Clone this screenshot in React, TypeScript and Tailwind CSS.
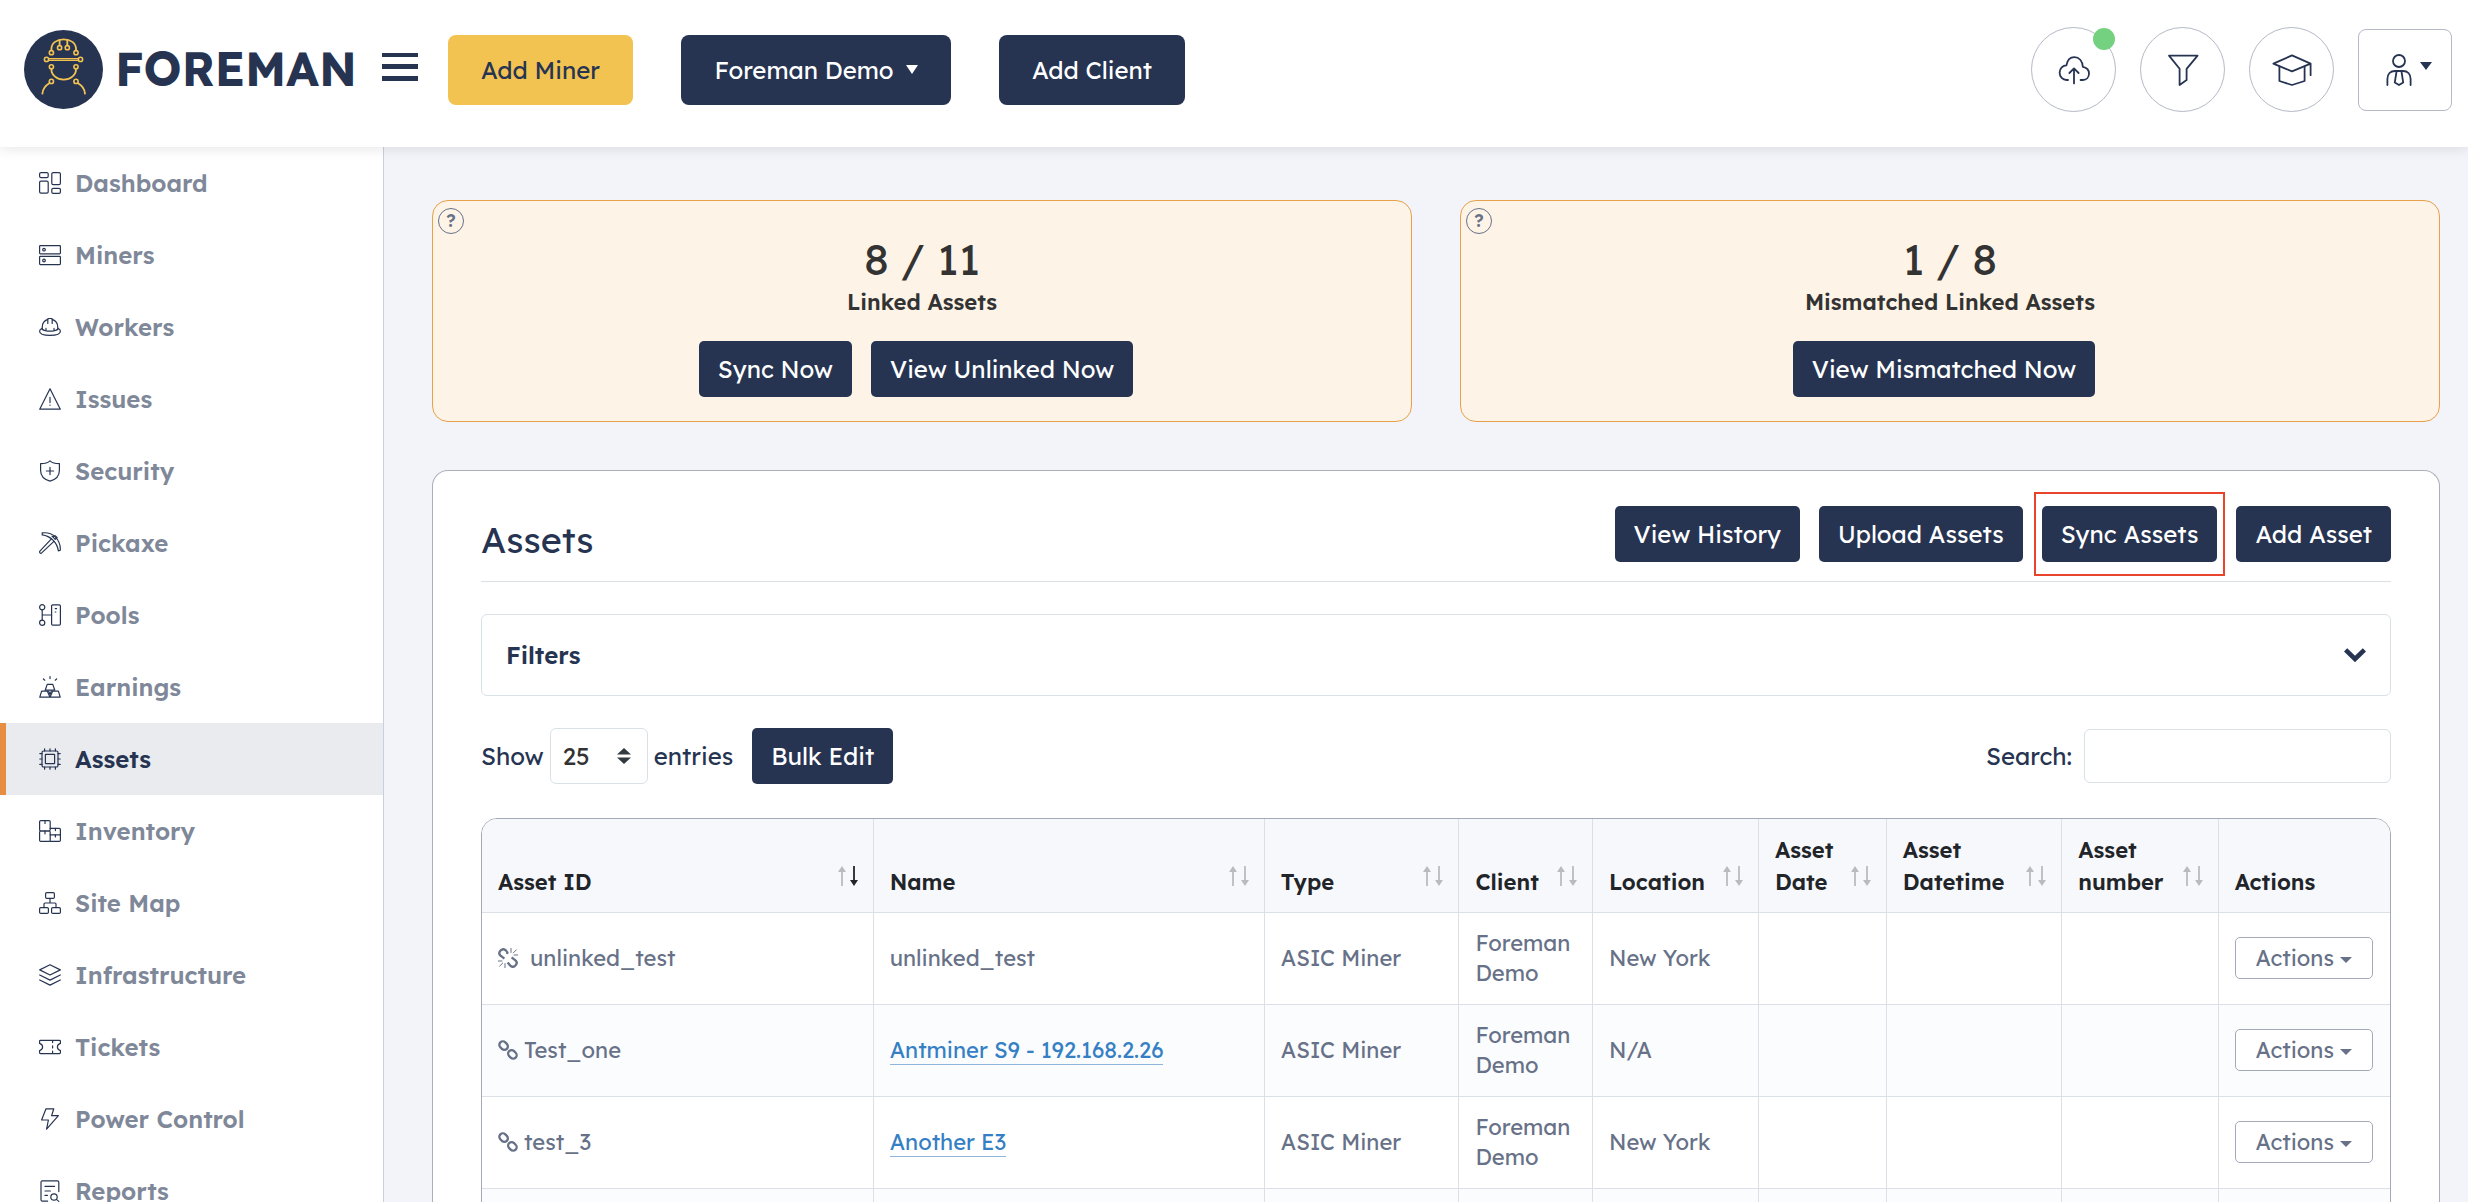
import React from "react";

type IconProps = { children: React.ReactNode };

function NavIcon({ children }: IconProps) {
  return (
    <svg
      viewBox="0 0 22 22"
      className="size-[22px] shrink-0"
      fill="none"
      stroke="#263452"
      strokeWidth="1.2"
      strokeLinejoin="round"
      strokeLinecap="round"
      aria-hidden="true"
    >
      {children}
    </svg>
  );
}

const navItems: { label: string; active?: boolean; icon: React.ReactNode }[] = [
  {
    label: "Dashboard",
    icon: (
      <>
        <rect x="0.6" y="0.6" width="8.6" height="5" rx="1.4" />
        <rect x="0.6" y="9.2" width="8.6" height="12" rx="1.4" />
        <rect x="12.8" y="0.6" width="8.6" height="12" rx="1.4" />
        <rect x="12.8" y="16.4" width="8.6" height="5" rx="1.4" />
      </>
    ),
  },
  {
    label: "Miners",
    icon: (
      <>
        <rect x="0.6" y="1.6" width="20.8" height="8.2" rx="0.8" />
        <rect x="0.6" y="12.4" width="20.8" height="8.2" rx="0.8" />
        <circle cx="5" cy="5.7" r="1.3" />
        <circle cx="5" cy="16.5" r="1.3" />
      </>
    ),
  },
  {
    label: "Workers",
    icon: (
      <>
        <path d="M3.2 13.6V11.4C3.2 7.4 5.6 4.5 8.8 3.4M13.2 3.4C16.4 4.5 18.8 7.4 18.8 11.4V13.6" />
        <path d="M8.8 7.4V3.2C8.8 2.8 9.1 2.5 9.5 2.5H12.5C12.9 2.5 13.2 2.8 13.2 3.2V7.4" />
        <path d="M3.2 12.2C1.6 12.8 .6 13.8 .6 15.2C.6 17.8 5 19.4 11 19.4S21.4 17.8 21.4 15.2C21.4 13.8 20.4 12.8 18.8 12.2" />
        <path d="M3.2 13.2C5 14.6 8 15.2 11 15.2S17 14.6 18.8 13.2M7 12.4V14.6M15 12.4V14.6" />
      </>
    ),
  },
  {
    label: "Issues",
    icon: (
      <>
        <path d="M11 .8L21.3 21.2H.7Z" />
        <path d="M11 9.4V14.6M11 17V17.3" />
      </>
    ),
  },
  {
    label: "Security",
    icon: (
      <>
        <path d="M11 .8C9 2.8 5.5 3.6 1.6 3.6V10.5C1.6 16 5.5 19.6 11 21.2C16.5 19.6 20.4 16 20.4 10.5V3.6C16.5 3.6 13 2.8 11 .8Z" />
        <path d="M7.4 11H14.6M11 7.4V14.6" />
      </>
    ),
  },
  {
    label: "Pickaxe",
    icon: (
      <>
        <path d="M3.2 .9C8 .3 13.2 1.9 16 4.6C19.2 7.8 21.6 13 21.3 18.2L19.4 18.9C18.7 14.4 16.6 10.6 14 8.2C11.2 5.4 7.4 3.4 3.2 2.9Z" />
        <path d="M12.4 6.9L.9 19.2C.5 19.8 .6 20.4 1 20.9C1.5 21.4 2.2 21.4 2.7 20.9L14.9 9.4M13 4.1L16.2 7.3L18.2 5.6L16.2 3.8L14.4 4.4" />
      </>
    ),
  },
  {
    label: "Pools",
    icon: (
      <>
        <circle cx="3.2" cy="3.2" r="2.6" />
        <circle cx="3.2" cy="18.8" r="2.6" />
        <path d="M3.2 5.8V16.2M3.2 11H12.6" />
        <rect x="12.6" y="0.8" width="8.8" height="20.4" rx="1.2" />
        <path d="M16.2 4.6H17.6M16.2 8H16.8" />
      </>
    ),
  },
  {
    label: "Earnings",
    icon: (
      <>
        <path d="M8.2 8.4H13.8L15.8 14.2H6.2Z" />
        <path d="M2.6 15.2H8.4L11 21.2H.8ZM13.6 15.2H19.4L21.2 21.2H11Z" />
        <path d="M11 .6V2.6M4.4 3L5.8 4.2M17.6 3L16.2 4.2M9.6 15L11 18.4L12.4 15" />
      </>
    ),
  },
  {
    label: "Assets",
    active: true,
    icon: (
      <>
        <rect x="3" y="3" width="16" height="16" rx="1.6" />
        <rect x="6.4" y="6.4" width="9.2" height="9.2" rx="0.4" />
        <path d="M5.6 3V.8M11 3V.8M16.4 3V.8M5.6 21.2V19M11 21.2V19M16.4 21.2V19M3 5.6H.8M3 11H.8M3 16.4H.8M21.2 5.6H19M21.2 11H19M21.2 16.4H19" />
      </>
    ),
  },
  {
    label: "Inventory",
    icon: (
      <>
        <rect x="0.6" y="0.6" width="10.6" height="10.4" rx="1.2" />
        <rect x="0.6" y="11" width="10.6" height="10.4" rx="1.2" />
        <path d="M11.2 8.4H20.2C20.9 8.4 21.4 8.9 21.4 9.6V20.2C21.4 20.9 20.9 21.4 20.2 21.4H11.2M11.2 14.8H21.4" />
        <path d="M6 .6V3.4M6 11V13.8M16.4 8.4V10.6M16.4 14.8V17" />
      </>
    ),
  },
  {
    label: "Site Map",
    icon: (
      <>
        <rect x="6.6" y="0.6" width="8.8" height="5.8" rx="1.2" />
        <rect x="0.6" y="15.6" width="8.8" height="5.8" rx="1.2" />
        <rect x="12.6" y="15.6" width="8.8" height="5.8" rx="1.2" />
        <path d="M11 6.4V11M5 15.6V12C5 11.4 5.4 11 6 11H16C16.6 11 17 11.4 17 12V15.6" />
      </>
    ),
  },
  {
    label: "Infrastructure",
    icon: (
      <>
        <path d="M11 .8L21.3 5.9L11 11L.7 5.9Z" />
        <path d="M.7 11L11 16.1L21.3 11M.7 16L11 21.1L21.3 16" />
      </>
    ),
  },
  {
    label: "Tickets",
    icon: (
      <>
        <path d="M1.4 4.4H20.6C21 4.4 21.4 4.8 21.4 5.2V7.4C19.6 8 18.4 9.4 18.4 11S19.6 14 21.4 14.6V16.8C21.4 17.2 21 17.6 20.6 17.6H1.4C1 17.6 .6 17.2 .6 16.8V14.6C2.4 14 3.6 12.6 3.6 11S2.4 8 .6 7.4V5.2C.6 4.8 1 4.4 1.4 4.4Z" />
        <path d="M13.6 4.6V6.6M13.6 9.8V12M13.6 15.2V17.4" />
      </>
    ),
  },
  {
    label: "Power Control",
    icon: <path d="M7 .8H14.8L12.6 7.6H19.4L7.6 21.2L9.4 12H2.6Z" />,
  },
  {
    label: "Reports",
    icon: (
      <>
        <path d="M8.6 21.2H3.4C2.6 21.2 2 20.6 2 19.8V2.2C2 1.4 2.6 .8 3.4 .8H18.4C19.2 .8 19.8 1.4 19.8 2.2V11.6" />
        <path d="M6 6.4H15.6M6 11H11.4M6 15.4H8.4" />
        <circle cx="15" cy="17" r="3.2" />
        <path d="M17.4 19.4L19.8 21.4" />
      </>
    ),
  },
];

function Logo() {
  return (
    <svg viewBox="0 0 79 79" className="size-[79px] shrink-0" fill="none" stroke="#f3c352" strokeWidth="1.8" strokeLinecap="round" aria-hidden="true">
      <circle cx="39.5" cy="39.5" r="39.5" fill="#263452" stroke="none" />
      <path d="M27.4 20.5V19C27.4 13 33 9.3 39.7 9.3S52 13 52 19V20.5" />
      <path d="M35.6 9.9V15.5M43.3 9.9V15.5" />
      <path d="M25 28.6H54M25 30.4H54" strokeWidth="1.2" />
      <path d="M27.4 39.2C27.4 45 33 49.7 39.7 49.7S52 45 52 39.2" />
      <path d="M25.6 52.9C20.6 56 18.6 59.4 18.4 63.6M53.8 52.9C58.8 56 60.8 59.4 61 63.6" />
      <g fill="#263452" strokeWidth="1.6">
        <circle cx="27.4" cy="22.7" r="2.1" />
        <circle cx="52" cy="22.7" r="2.1" />
        <circle cx="35.6" cy="17.7" r="2.1" />
        <circle cx="43.3" cy="17.7" r="2.1" />
        <circle cx="22.5" cy="29.4" r="2.1" />
        <circle cx="56.5" cy="29.4" r="2.1" />
        <circle cx="27.4" cy="36.8" r="2.1" />
        <circle cx="52" cy="36.8" r="2.1" />
        <circle cx="27.4" cy="51.4" r="2.1" />
        <circle cx="52" cy="51.4" r="2.1" />
      </g>
    </svg>
  );
}

function RoundButton({ label, dot, children }: { label: string; dot?: boolean; children: React.ReactNode }) {
  return (
    <button aria-label={label} className="relative flex size-[85px] shrink-0 items-center justify-center rounded-full border border-[#b4b9c5]">
      <svg viewBox="0 0 40 40" className="size-10" fill="none" stroke="#263452" strokeWidth="1.8" strokeLinejoin="round" strokeLinecap="round" aria-hidden="true">
        {children}
      </svg>
      {dot && <span className="absolute right-0 top-0 size-[22px] rounded-full bg-[#74d180]" />}
    </button>
  );
}

function Header() {
  return (
    <header className="z-10 flex h-[147px] shrink-0 items-center bg-white pl-6 pr-4 pb-2 shadow-[0_2px_12px_rgba(0,0,0,0.1)]">
      <a href="#home" className="flex w-[332px] items-center gap-3 text-[47px] font-bold text-[#263452]">
        <Logo />
        FOREMAN
      </a>
      <button aria-label="Toggle menu" className="ml-[26px] flex w-9 flex-col gap-[7px] pb-1.5">
        <span className="h-1 w-full bg-[#263452]" />
        <span className="h-[5px] w-full bg-[#263452]" />
        <span className="h-[5px] w-full bg-[#263452]" />
      </button>
      <div className="ml-[30px] flex gap-12 text-2xl">
        <button className="h-[70px] w-[185px] rounded-lg bg-[#f3c352] text-[#263452]">Add Miner</button>
        <button className="flex h-[70px] w-[270px] items-center justify-center gap-3 rounded-lg bg-[#263452] text-white">
          Foreman Demo
          <svg viewBox="0 0 12 9" className="h-[9px] w-3" fill="currentColor" aria-hidden="true">
            <path d="M0 0H12L6 9Z" />
          </svg>
        </button>
        <button className="h-[70px] w-[186px] rounded-lg bg-[#263452] text-white">Add Client</button>
      </div>
      <div className="ml-auto flex items-center gap-6">
        <RoundButton label="Uploads" dot>
          <path d="M14 30H12.6C8.8 30 5.6 27 5.6 22.6C5.6 18.2 9 15.4 12.4 15.4C13.2 10.6 16.2 7.2 20.4 7.2C25 7.2 28.6 10.8 28.8 16.8C32.6 17.4 35 20 35 23.6C35 27.4 32.4 30 29 30H26.6" />
          <path d="M20 33.4V18.4M15.4 23L20 18.4L24.6 23" />
        </RoundButton>
        <RoundButton label="Filter">
          <path d="M6 5.6H34.6L23.6 18.8V30L16.6 35V18.8Z" />
        </RoundButton>
        <RoundButton label="Academy">
          <path d="M1.4 13.6L20 5.4L38.6 13.6L20 21.4ZM38.6 13.6V25.2" />
          <path d="M7.4 16.4V31L20 35L32.6 31V16.4" />
        </RoundButton>
        <button aria-label="Account" className="flex h-[82px] w-[94px] items-center justify-center gap-2 rounded-lg border border-[#b4b9c5] pl-2">
          <svg viewBox="0 0 26 32" className="h-8 w-[26px]" fill="none" stroke="#263452" strokeWidth="1.8" strokeLinejoin="round" strokeLinecap="round" aria-hidden="true">
            <circle cx="13" cy="7" r="6" />
            <path d="M1.4 31V25C1.4 20 4.4 17 9 17H17C21.6 17 24.6 20 24.6 25V31" />
            <path d="M10.6 17L8.8 28.4L13 31L17.2 28.4L15.4 17" />
          </svg>
          <svg viewBox="0 0 12 8" className="mb-2 h-2 w-3" fill="#263452" aria-hidden="true">
            <path d="M0 0H12L6 8Z" />
          </svg>
        </button>
      </div>
    </header>
  );
}

function Sidebar() {
  return (
    <nav className="w-96 shrink-0 border-r border-[#c8d0dc] bg-white">
      <ul>
        {navItems.map((item) => (
          <li key={item.label}>
            <a
              href={"#" + item.label.toLowerCase().replace(" ", "-")}
              className={
                item.active
                  ? "flex h-18 items-center gap-3.5 border-l-6 border-[#e68e41] bg-[#e9ebee] pl-[33px] text-2xl font-semibold text-[#263452]"
                  : "flex h-18 items-center gap-3.5 border-l-6 border-transparent pl-[33px] text-2xl font-semibold text-[#7f8899]"
              }
            >
              <NavIcon>{item.icon}</NavIcon>
              {item.label}
            </a>
          </li>
        ))}
      </ul>
    </nav>
  );
}

function ActionButton({ children }: { children: React.ReactNode }) {
  return (
    <button className="h-14 whitespace-nowrap rounded-[5px] bg-[#263452] px-[19px] text-2xl text-white">{children}</button>
  );
}

function StatCard({ value, label, actions }: { value: string; label: string; actions: string[] }) {
  return (
    <section className="relative flex flex-1 flex-col items-center rounded-2xl border border-[#e9a04a] bg-[#fdf4e7] pb-6 pt-8">
      <button
        aria-label={"About " + label}
        className="absolute left-[5px] top-[7px] flex size-[26px] items-center justify-center rounded-full border border-[#677187] text-lg font-semibold text-[#677187]"
      >
        ?
      </button>
      <p className="text-[43px] leading-[52px] text-[#333333]">{value}</p>
      <p className="mt-px text-[22px] font-semibold leading-8 text-[#333333]">{label}</p>
      <div className="mr-3 mt-[23px] flex gap-[19px]">
        {actions.map((action) => (
          <ActionButton key={action}>{action}</ActionButton>
        ))}
      </div>
    </section>
  );
}

function SortArrows({ descending }: { descending?: boolean }) {
  return (
    <svg viewBox="0 0 22 20" className="mb-3 h-5 w-[22px] shrink-0" fill="none" strokeWidth="1.8" aria-hidden="true">
      <path d="M5 20V4" stroke="#b9bbbf" />
      <path d="M1 6L5 0L9 6Z" fill="#b9bbbf" />
      <path d="M17 0V16" stroke={descending ? "#212529" : "#b9bbbf"} />
      <path d="M13 14L17 20L21 14Z" fill={descending ? "#212529" : "#b9bbbf"} />
    </svg>
  );
}

function LinkedIcon() {
  return (
    <svg viewBox="0 0 20 20" className="size-5 shrink-0" fill="none" stroke="#677187" strokeWidth="2.3" strokeLinecap="round" aria-hidden="true">
      <rect x="-4.6" y="-3.5" width="9.2" height="7" rx="3.5" transform="translate(5.6 5.6) rotate(45)" />
      <rect x="-4.6" y="-3.5" width="9.2" height="7" rx="3.5" transform="translate(14.4 14.4) rotate(45)" />
    </svg>
  );
}

function UnlinkedIcon() {
  return (
    <svg viewBox="0 0 20 20" className="size-5 shrink-0" fill="none" stroke="#677187" strokeWidth="2.3" strokeLinecap="butt" aria-hidden="true">
      <path d="M6.4 10.6L2.6 7.6C1 6.2 1 4.4 2.2 3L3 2.2C4.4 1 6.4 1 7.8 2.4L9.4 4.4L9 6" />
      <path d="M13.6 9.4L17.4 12.4C19 13.8 19 15.6 17.8 17L17 17.8C15.6 19 13.6 19 12.2 17.6L9.6 14.4" />
      <path d="M13 4.8V0M15 5.2L18.6 1.6M15.6 7H20M7 15.2V20M5 14.8L1.4 18.4M4.4 13H0" strokeWidth="1" />
    </svg>
  );
}

const columns = [
  { label: "Asset ID", width: "w-[20.5%]" },
  { label: "Name", width: "w-[20.5%]" },
  { label: "Type", width: "w-[10.2%]" },
  { label: "Client", width: "w-[7%]" },
  { label: "Location", width: "w-[8.7%]" },
  { label: "Asset Date", width: "w-[6.7%]" },
  { label: "Asset Datetime", width: "w-[9.2%]" },
  { label: "Asset number", width: "w-[8.2%]" },
  { label: "Actions", width: "w-[9%]" },
];

const rows = [
  { id: "unlinked_test", name: "unlinked_test", linked: false, location: "New York" },
  { id: "Test_one", name: "Antminer S9 - 192.168.2.26", linked: true, location: "N/A" },
  { id: "test_3", name: "Another E3", linked: true, location: "New York" },
];

function AssetsTable() {
  return (
    <div className="mt-[34px] overflow-hidden rounded-t-2xl border border-[#a3a9b5]">
      <table className="w-full table-fixed text-left text-[22px] leading-[30px] text-[#677187]">
        <thead>
          <tr className="h-[93px] border-b border-[#dbe0e6] bg-[#f7f8fb] text-[#212529]">
            {columns.map((column, i) => (
              <th key={column.label} className={column.width + " border-r border-[#dbe0e6] pb-3.5 pl-4 pr-3.5 align-bottom text-[22px] font-semibold leading-8 last:border-r-0"}>
                <span className="flex items-end justify-between">
                  {column.label}
                  {column.label !== "Actions" && <SortArrows descending={i === 0} />}
                </span>
              </th>
            ))}
          </tr>
        </thead>
        <tbody>
          {rows.map((row) => (
            <tr key={row.id} className="h-[92px] border-b border-[#dbe0e6] even:bg-[#fbfcfe] *:border-r *:border-[#dbe0e6] *:px-4 *:last:border-r-0">
              <td>
                <span className={row.linked ? "flex items-center gap-1.5" : "flex items-center gap-3"}>
                  {row.linked ? <LinkedIcon /> : <UnlinkedIcon />}
                  {row.id}
                </span>
              </td>
              <td>
                {row.linked ? (
                  <a href={"#" + row.id} className="border-b border-[#8fb5dc] text-[#3580c4]">
                    {row.name}
                  </a>
                ) : (
                  row.name
                )}
              </td>
              <td>ASIC Miner</td>
              <td>Foreman Demo</td>
              <td>{row.location}</td>
              <td />
              <td />
              <td />
              <td>
                <button className="flex h-[42px] w-full max-w-[138px] items-center justify-center gap-1.5 rounded-[5px] border border-[#a3a9b9] bg-white">
                  Actions
                  <svg viewBox="0 0 12 6" className="mt-1 h-1.5 w-3" fill="currentColor" aria-hidden="true">
                    <path d="M0 0H12L6 6Z" />
                  </svg>
                </button>
              </td>
            </tr>
          ))}
          <tr className="h-[92px] bg-[#fbfcfe] *:border-r *:border-[#dbe0e6] *:last:border-r-0">
            {columns.map((column) => (
              <td key={column.label} />
            ))}
          </tr>
        </tbody>
      </table>
    </div>
  );
}

function AssetsPanel() {
  return (
    <section className="mt-12 rounded-t-2xl border border-b-0 border-[#a9aebb] bg-white px-12 pt-[35px]">
      <div className="flex items-start justify-between border-b border-[#d8e2e6] pb-[19px]">
        <h1 className="pt-3 text-4xl leading-11 text-[#263452]">Assets</h1>
        <div className="flex gap-[19px]">
          <ActionButton>View History</ActionButton>
          <ActionButton>Upload Assets</ActionButton>
          <div className="relative">
            <ActionButton>Sync Assets</ActionButton>
            <span className="pointer-events-none absolute -inset-x-2 -bottom-3.5 -top-3.5 border-2 border-[#e8432c]" />
          </div>
          <ActionButton>Add Asset</ActionButton>
        </div>
      </div>
      <button className="mt-8 flex h-[82px] w-full items-center justify-between rounded-md border border-[#d8e2e6] px-6 text-2xl font-semibold text-[#263452]">
        Filters
        <svg viewBox="0 0 22 14" className="h-3.5 w-[22px]" fill="none" stroke="currentColor" strokeWidth="4.6" aria-hidden="true">
          <path d="M1.6 1.8L11 11L20.4 1.8" />
        </svg>
      </button>
      <div className="mt-8 flex items-center text-2xl text-[#263452]">
        <label className="flex items-center gap-1.5">
          Show
          <span className="relative">
            <select defaultValue="25" className="h-14 w-[98px] appearance-none rounded-md border border-[#d8e2e6] bg-white pl-3 text-[#333333]">
              <option>25</option>
            </select>
            <svg viewBox="0 0 14 16" className="pointer-events-none absolute right-[17px] top-5 h-4 w-3.5" fill="#333a40" aria-hidden="true">
              <path d="M0 6.6L7 0L14 6.6ZM0 9.4L7 16L14 9.4Z" />
            </svg>
          </span>
          entries
        </label>
        <div className="ml-[19px]">
          <ActionButton>Bulk Edit</ActionButton>
        </div>
        <label className="ml-auto flex items-center gap-3">
          Search:
          <input type="search" className="h-[54px] w-[307px] rounded-md border border-[#d8e2e6]" />
        </label>
      </div>
      <AssetsTable />
    </section>
  );
}

export default function App() {
  return (
    <div className="flex h-screen flex-col overflow-hidden bg-[#f3f4f9] font-['Lexend','Inter',sans-serif]">
      <Header />
      <div className="flex min-h-0 flex-1 overflow-hidden">
        <Sidebar />
        <main className="min-w-0 flex-1 pl-12 pr-7 pt-[53px]">
          <div className="flex gap-12">
            <StatCard value="8 / 11" label="Linked Assets" actions={["Sync Now", "View Unlinked Now"]} />
            <StatCard value="1 / 8" label="Mismatched Linked Assets" actions={["View Mismatched Now"]} />
          </div>
          <AssetsPanel />
        </main>
      </div>
    </div>
  );
}
